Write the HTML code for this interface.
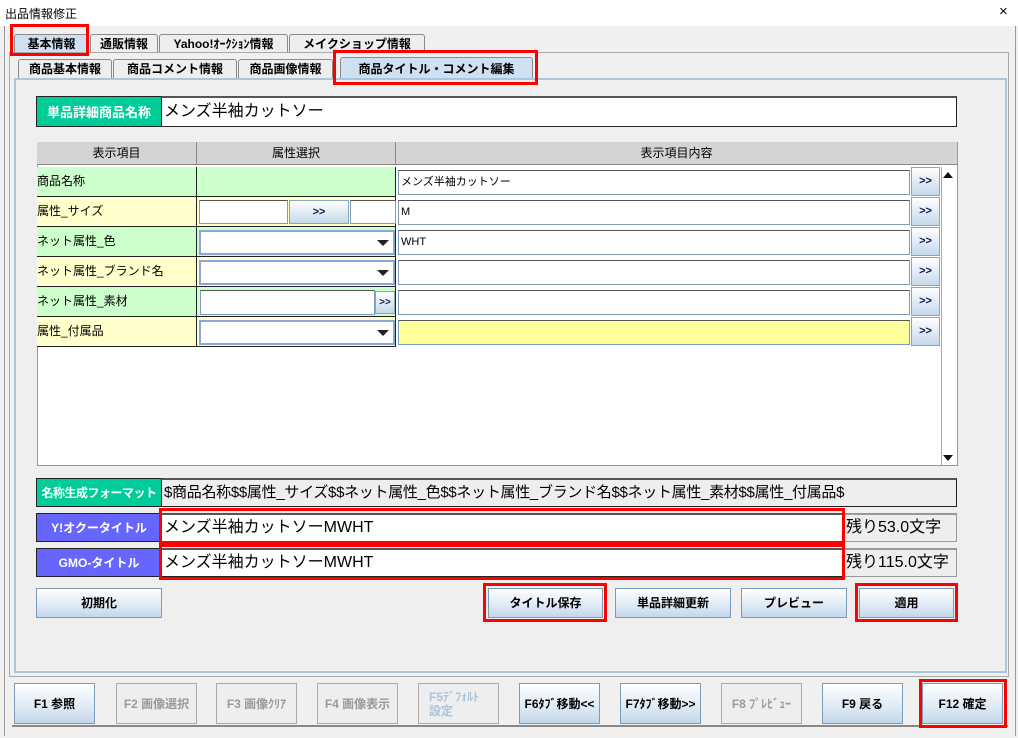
<!DOCTYPE html>
<html><head><meta charset="utf-8"><style>
*{box-sizing:border-box;margin:0;padding:0}
body{width:1018px;height:738px;background:#f0f0f0;font-family:"Liberation Sans","Noto Sans CJK JP",sans-serif;position:relative;overflow:hidden;font-size:12px;color:#000}
.a{position:absolute}
.tab{position:absolute;border:1px solid #8a8a8a;border-bottom:none;background:#eee;font-weight:bold;font-size:12px;text-align:center;line-height:18px;border-radius:3px 3px 0 0}
.sel{background:#cfe0f2}
.red{position:absolute;border:3px solid #f00}
.btn{position:absolute;border:1px solid #7a9cb8;background:linear-gradient(#fff,#dde9f5 60%,#c3d7ea);font-weight:bold;font-size:12px;display:flex;align-items:center;justify-content:center;text-align:center;line-height:14px}
.dis{background:#eee;border-color:#aaa;color:#999}
.lbl{position:absolute;color:#fff;font-weight:bold;border:1px solid #222;display:flex;align-items:center;justify-content:center;font-size:13px;white-space:nowrap;overflow:hidden}
.fld{position:absolute;background:#fff;border:1px solid #222;border-top:2px solid #555;font-size:16px;line-height:24px;padding-left:2px;white-space:nowrap;overflow:hidden}
.cell{position:absolute;border-right:1px solid #222;border-bottom:1px solid #222;font-size:12px;line-height:29px}
.in{position:absolute;background:#fff;border:1px solid #7f9db9;border-top-color:#555;font-size:11px;line-height:20px;padding-left:2px}
.bb{position:absolute;width:29px;height:29px;background:linear-gradient(#fff,#c5d8eb);border:1px solid #8aa;font-weight:bold;font-size:11px;text-align:center;line-height:27px;color:#0a1a4a}
.cb{position:absolute;background:#fff;border:2px solid #8aa7d8}
.ar{position:absolute;width:0;height:0;border-left:6px solid transparent;border-right:6px solid transparent;border-top:6px solid #222}
</style></head><body>
<div class="a" style="left:0;top:0;width:1018px;height:26px;background:#fff"></div>
<div class="a" style="left:5px;top:5px;font-size:12px">出品情報修正</div>
<div class="a" style="left:999px;top:3px;font-size:15px;font-weight:300">×</div>
<div class="a" style="left:4px;top:26px;width:1012px;height:710px;border-left:1px solid #999;border-right:1px solid #999"></div>

<div class="tab sel" style="left:14px;top:34px;width:75px;height:19px">基本情報</div>
<div class="tab" style="left:90px;top:34px;width:68px;height:19px">通販情報</div>
<div class="tab" style="left:159px;top:34px;width:129px;height:19px">Yahoo!ｵｰｸｼｮﾝ情報</div>
<div class="tab" style="left:289px;top:34px;width:136px;height:19px">メイクショップ情報</div>
<div class="a" style="left:9px;top:52px;width:1000px;height:625px;border:1px solid #aaa;background:#f0f0f0"></div>
<div class="tab" style="left:18px;top:59px;width:94px;height:19px">商品基本情報</div>
<div class="tab" style="left:113px;top:59px;width:124px;height:19px">商品コメント情報</div>
<div class="tab" style="left:238px;top:59px;width:95px;height:19px">商品画像情報</div>
<div class="tab sel" style="left:340px;top:57px;width:193px;height:22px;line-height:22px">商品タイトル・コメント編集</div>
<div class="a" style="left:14px;top:78px;width:993px;height:595px;border:2px solid #a9c6e0;background:#efefef"></div>

<div class="lbl" style="left:36px;top:96px;width:126px;height:31px;background:#00cc99">単品詳細商品名称</div>
<div class="fld" style="left:161px;top:96px;width:796px;height:31px;line-height:28px">メンズ半袖カットソー</div>

<div class="a" style="left:37px;top:142px;width:921px;height:324px;background:#fff;border:1px solid #999"></div>
<div class="a" style="left:37px;top:142px;width:920px;height:23px;background:#d4d4d4;border-bottom:1px solid #888"></div>
<div class="a" style="left:37px;top:142px;width:160px;height:23px;border-right:1px solid #888;text-align:center;line-height:23px">表示項目</div>
<div class="a" style="left:197px;top:142px;width:199px;height:23px;border-right:1px solid #888;text-align:center;line-height:23px">属性選択</div>
<div class="a" style="left:396px;top:142px;width:561px;height:23px;text-align:center;line-height:23px">表示項目内容</div>

<div class="cell" style="left:37px;top:167px;width:160px;height:30px;background:#ccffcc">商品名称</div>
<div class="cell" style="left:197px;top:167px;width:199px;height:30px;background:#ccffcc"></div>
<div class="cell" style="left:37px;top:197px;width:160px;height:30px;background:#ffffcc">属性_サイズ</div>
<div class="cell" style="left:197px;top:197px;width:199px;height:30px;background:#ffffcc"></div>
<div class="cell" style="left:37px;top:227px;width:160px;height:30px;background:#ccffcc">ネット属性_色</div>
<div class="cell" style="left:197px;top:227px;width:199px;height:30px;background:#ccffcc"></div>
<div class="cell" style="left:37px;top:257px;width:160px;height:30px;background:#ffffcc">ネット属性_ブランド名</div>
<div class="cell" style="left:197px;top:257px;width:199px;height:30px;background:#ffffcc"></div>
<div class="cell" style="left:37px;top:287px;width:160px;height:30px;background:#ccffcc">ネット属性_素材</div>
<div class="cell" style="left:197px;top:287px;width:199px;height:30px;background:#ccffcc"></div>
<div class="cell" style="left:37px;top:317px;width:160px;height:30px;background:#ffffcc">属性_付属品</div>
<div class="cell" style="left:197px;top:317px;width:199px;height:30px;background:#ffffcc"></div>
<div class="a" style="left:396px;top:167px;width:515px;height:180px;background:#fff"></div>

<div class="in" style="left:199px;top:200px;width:89px;height:24px"></div>
<div class="bb" style="left:289px;top:200px;width:60px;height:24px;line-height:22px">&gt;&gt;</div>
<div class="in" style="left:350px;top:200px;width:46px;height:24px"></div>
<div class="cb" style="left:199px;top:230px;width:196px;height:25px"></div><div class="ar" style="left:377px;top:240px"></div>
<div class="cb" style="left:199px;top:260px;width:196px;height:25px"></div><div class="ar" style="left:377px;top:270px"></div>
<div class="in" style="left:200px;top:290px;width:175px;height:25px"></div>
<div class="bb" style="left:375px;top:291px;width:20px;height:23px;line-height:21px;font-size:10px">&gt;&gt;</div>
<div class="cb" style="left:199px;top:320px;width:196px;height:25px"></div><div class="ar" style="left:377px;top:330px"></div>

<div class="in" style="left:398px;top:170px;width:512px;height:25px;line-height:23px">メンズ半袖カットソー</div>
<div class="in" style="left:398px;top:200px;width:512px;height:25px;line-height:23px">M</div>
<div class="in" style="left:398px;top:230px;width:512px;height:25px;line-height:23px">WHT</div>
<div class="in" style="left:398px;top:260px;width:512px;height:25px"></div>
<div class="in" style="left:398px;top:290px;width:512px;height:25px"></div>
<div class="in" style="left:398px;top:320px;width:512px;height:25px;background:#ffff99"></div>
<div class="bb" style="left:911px;top:167px">&gt;&gt;</div>
<div class="bb" style="left:911px;top:197px">&gt;&gt;</div>
<div class="bb" style="left:911px;top:227px">&gt;&gt;</div>
<div class="bb" style="left:911px;top:257px">&gt;&gt;</div>
<div class="bb" style="left:911px;top:287px">&gt;&gt;</div>
<div class="bb" style="left:911px;top:317px">&gt;&gt;</div>
<div class="a" style="left:941px;top:167px;width:16px;height:298px;background:#fff;border-left:1px solid #aaa"></div>
<div class="a" style="left:943px;top:172px;border-left:5px solid transparent;border-right:5px solid transparent;border-bottom:6px solid #111"></div>
<div class="a" style="left:943px;top:455px;border-left:5px solid transparent;border-right:5px solid transparent;border-top:6px solid #111"></div>

<div class="lbl" style="left:36px;top:478px;width:126px;height:29px;background:#00cc99;font-size:12px;letter-spacing:-0.5px">名称生成フォーマット</div>
<div class="fld" style="left:161px;top:478px;width:796px;height:29px;background:#eee;line-height:26px;font-size:15px;letter-spacing:-0.3px">$商品名称$$属性_サイズ$$ネット属性_色$$ネット属性_ブランド名$$ネット属性_素材$$属性_付属品$</div>
<div class="lbl" style="left:36px;top:513px;width:126px;height:29px;background:#6666ff;font-size:12px">Y!オクータイトル</div>
<div class="fld" style="left:161px;top:513px;width:683px;height:29px;line-height:26px">メンズ半袖カットソーMWHT</div>
<div class="fld" style="left:843px;top:513px;width:114px;height:29px;background:#eee;line-height:26px;border-color:#999">残り53.0文字</div>
<div class="red" style="left:159px;top:508px;width:686px;height:36px"></div>
<div class="lbl" style="left:36px;top:548px;width:126px;height:29px;background:#6666ff;font-size:12px">GMO-タイトル</div>
<div class="fld" style="left:161px;top:548px;width:683px;height:29px;line-height:26px">メンズ半袖カットソーMWHT</div>
<div class="fld" style="left:843px;top:548px;width:114px;height:29px;background:#eee;line-height:26px;border-color:#999">残り115.0文字</div>
<div class="red" style="left:159px;top:544px;width:686px;height:36px"></div>

<div class="btn" style="left:36px;top:588px;width:126px;height:30px">初期化</div>
<div class="btn" style="left:488px;top:588px;width:115px;height:30px">タイトル保存</div>
<div class="btn" style="left:615px;top:588px;width:116px;height:30px">単品詳細更新</div>
<div class="btn" style="left:741px;top:588px;width:106px;height:30px">プレビュー</div>
<div class="btn" style="left:859px;top:588px;width:95px;height:30px">適用</div>
<div class="red" style="left:483px;top:583px;width:124px;height:39px"></div>
<div class="red" style="left:855px;top:583px;width:103px;height:39px"></div>

<div class="a" style="left:12px;top:725px;width:996px;height:2px;background:#888"></div>
<div class="btn" style="left:14px;top:683px;width:81px;height:41px">F1 参照</div>
<div class="btn dis" style="left:116px;top:683px;width:81px;height:41px">F2 画像選択</div>
<div class="btn dis" style="left:216px;top:683px;width:81px;height:41px">F3 画像ｸﾘｱ</div>
<div class="btn dis" style="left:317px;top:683px;width:81px;height:41px">F4 画像表示</div>
<div class="btn dis" style="left:418px;top:683px;width:81px;height:41px;color:#aac4dc;justify-content:flex-start;padding-left:10px;text-align:left">F5ﾃﾞﾌｫﾙﾄ<br>設定</div>
<div class="btn" style="left:519px;top:683px;width:81px;height:41px">F6ﾀﾌﾞ移動&lt;&lt;</div>
<div class="btn" style="left:620px;top:683px;width:81px;height:41px">F7ﾀﾌﾞ移動&gt;&gt;</div>
<div class="btn dis" style="left:721px;top:683px;width:81px;height:41px">F8 ﾌﾟﾚﾋﾞｭｰ</div>
<div class="btn" style="left:822px;top:683px;width:81px;height:41px">F9 戻る</div>
<div class="btn" style="left:922px;top:683px;width:81px;height:41px">F12 確定</div>
<div class="red" style="left:919px;top:679px;width:88px;height:49px"></div>

<div class="red" style="left:10px;top:24px;width:79px;height:32px"></div>
<div class="red" style="left:333px;top:50px;width:205px;height:35px"></div>
</body></html>
